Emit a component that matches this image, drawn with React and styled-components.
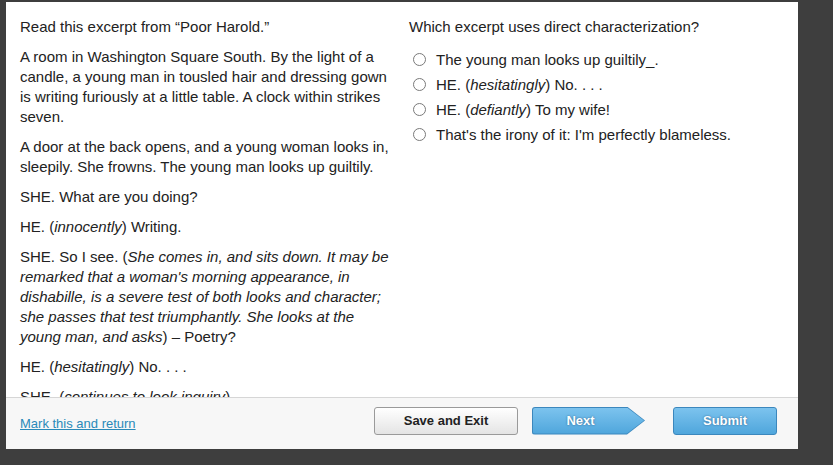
import React from 'react'
import styled, { createGlobalStyle } from 'styled-components'

const GlobalStyle = createGlobalStyle`
  html, body {
    margin: 0;
    padding: 0;
    background: #3e3e3e;
  }
  body {
    font-family: "Liberation Sans", Arial, sans-serif;
    color: #222;
  }
`;

const Panel = styled.div`
  margin: 2px 0 0 6px;
  width: 792px;
  height: 447px;
  background: #fff;
  display: flex;
  flex-direction: column;
`;

const Body = styled.div`
  height: 395px;
  overflow: hidden;
  display: grid;
  grid-template-columns: 372px 1fr;
  column-gap: 17px;
  padding: 0 14px;
  box-sizing: border-box;
`;

const Column = styled.div`
  padding-top: 15px;
  font-size: 15px;
  line-height: 20px;
  color: #222;

  p {
    margin: 0 0 10px;
  }
`;

const OptionList = styled.ul`
  list-style: none;
  margin: 0;
  padding: 0;
`;

const Option = styled.li`
  display: flex;
  align-items: center;
  height: 25px;
`;

const Radio = styled.span`
  width: 11px;
  height: 11px;
  border: 1px solid #7a7a7a;
  border-radius: 50%;
  margin: 0 10px 0 4px;
  background: #fff;
  flex: none;
`;

const Footer = styled.div`
  flex: 1;
  border-top: 1px solid #d6d6d6;
  background: #f7f7f7;
  display: flex;
  align-items: center;
  justify-content: space-between;
  padding: 0 21px 0 14px;
`;

const MarkLink = styled.a`
  font-size: 13px;
  color: #2a8ab9;
  text-decoration: underline;
  cursor: pointer;
`;

const Buttons = styled.div`
  display: flex;
  align-items: center;
  margin-bottom: 6px;
`;

const GreyButton = styled.button`
  width: 144px;
  height: 28px;
  border: 1px solid #9a9a9a;
  border-radius: 3px;
  background: linear-gradient(#ffffff, #e4e4e4);
  font-family: "Liberation Sans", Arial, sans-serif;
  font-weight: bold;
  font-size: 13px;
  color: #222;
  margin-right: 14px;
`;

const BlueButton = styled.button`
  width: ${({ w }) => w}px;
  height: 28px;
  border: 1px solid #3b87bd;
  border-radius: 3px;
  background: linear-gradient(#7cc3ee, #4fa6dc);
  font-family: "Liberation Sans", Arial, sans-serif;
  font-weight: bold;
  font-size: 13px;
  color: #fff;
  text-shadow: 0 0 2px rgba(0, 40, 80, 0.6);
`;

const ArrowOuter = styled.div`
  width: 113px;
  height: 28px;
  background: #3b87bd;
  clip-path: polygon(0 0, 95px 0, 113px 14px, 95px 28px, 0 28px);
  border-radius: 3px;
  margin-right: 28px;
`;

const ArrowInner = styled.button`
  display: block;
  margin: 1px;
  width: 111px;
  height: 26px;
  border: 0;
  border-radius: 2px;
  padding: 0 16px 0 0;
  background: linear-gradient(#7cc3ee, #4fa6dc);
  clip-path: polygon(0 0, 94px 0, 111px 13px, 94px 26px, 0 26px);
  font-family: "Liberation Sans", Arial, sans-serif;
  font-weight: bold;
  font-size: 13px;
  color: #fff;
  text-shadow: 0 0 2px rgba(0, 40, 80, 0.6);
`;

const options = [
  <>The young man looks up guiltily_.</>,
  <>HE. (<i>hesitatingly</i>) No. . . .</>,
  <>HE. (<i>defiantly</i>) To my wife!</>,
  <>That's the irony of it: I'm perfectly blameless.</>,
]

const App = () => {
  return (
    <>
      <GlobalStyle />
      <Panel>
        <Body>
          <Column>
            <p>Read this excerpt from “Poor Harold.”</p>
            <p>A room in Washington Square South. By the light of a candle, a young man in tousled hair and dressing gown is writing furiously at a little table. A clock within strikes seven.</p>
            <p>A door at the back opens, and a young woman looks in, sleepily. She frowns. The young man looks up guiltily.</p>
            <p>SHE. What are you doing?</p>
            <p>HE. (<i>innocently</i>) Writing.</p>
            <p>SHE. So I see. (<i>She comes in, and sits down. It may be remarked that a woman's morning appearance, in dishabille, is a severe test of both looks and character; she passes that test triumphantly. She looks at the young man, and asks</i>) – Poetry?</p>
            <p>HE. (<i>hesitatingly</i>) No. . . .</p>
            <p>SHE. (<i>continues to look inquiry</i>)</p>
          </Column>
          <Column>
            <p>Which excerpt uses direct characterization?</p>
            <OptionList>
              {options.map((o, i) => (
                <Option key={i}>
                  <Radio />
                  <span>{o}</span>
                </Option>
              ))}
            </OptionList>
          </Column>
        </Body>
        <Footer>
          <MarkLink>Mark this and return</MarkLink>
          <Buttons>
            <GreyButton>Save and Exit</GreyButton>
            <ArrowOuter>
              <ArrowInner>Next</ArrowInner>
            </ArrowOuter>
            <BlueButton w={104}>Submit</BlueButton>
          </Buttons>
        </Footer>
      </Panel>
    </>
  )
}

export default App
